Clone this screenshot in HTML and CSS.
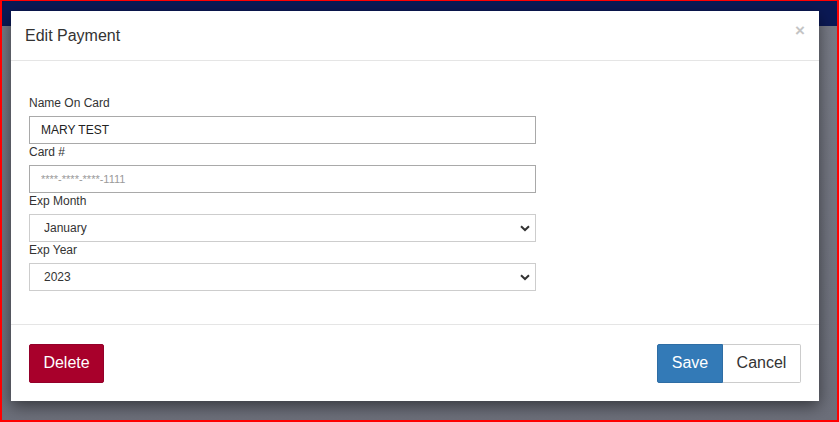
FILE: index.html
```html
<!DOCTYPE html>
<html>
<head>
<meta charset="utf-8">
<title>Edit Payment</title>
<link rel="stylesheet" href="styles.css">
</head>
<body>
<div class="frame">
  <div class="topbar"></div>
  <div class="backdrop"></div>
  <div class="modal">
    <div class="modal-header">
      <h4 class="modal-title">Edit Payment</h4>
      <button class="close" type="button">×</button>
    </div>
    <div class="modal-body">
      <div class="field">
        <label class="label">Name On Card</label>
        <input class="input" type="text" value="MARY TEST">
      </div>
      <div class="field">
        <label class="label">Card #</label>
        <input class="input" type="text" placeholder="****-****-****-1111">
      </div>
      <div class="field">
        <label class="label">Exp Month</label>
        <div class="select-wrap">
          <select class="select"><option>January</option></select>
          <svg class="chevron" width="10" height="7" viewBox="0 0 10 7"><path d="M1 1.2 L5 5 L9 1.2" fill="none" stroke="#333" stroke-width="2"/></svg>
        </div>
      </div>
      <div class="field">
        <label class="label">Exp Year</label>
        <div class="select-wrap">
          <select class="select"><option>2023</option></select>
          <svg class="chevron" width="10" height="7" viewBox="0 0 10 7"><path d="M1 1.2 L5 5 L9 1.2" fill="none" stroke="#333" stroke-width="2"/></svg>
        </div>
      </div>
    </div>
    <div class="modal-footer">
      <button class="btn btn-delete" type="button">Delete</button>
      <div class="btn-group">
        <button class="btn btn-save" type="button">Save</button>
        <button class="btn btn-cancel" type="button">Cancel</button>
      </div>
    </div>
  </div>
</div>
</body>
</html>
```

FILE: styles.css
```css
html, body {
  margin: 0;
  padding: 0;
}
body {
  font-family: "Liberation Sans", Arial, sans-serif;
  color: #333;
}
.frame {
  position: relative;
  width: 839px;
  height: 422px;
  box-sizing: border-box;
  border: 2px solid #f00;
  border-top-width: 1px;
  display: flex;
  flex-direction: column;
  overflow: hidden;
  background: #6f727d;
}
.topbar {
  height: 25px;
  background: #0b1955;
  flex: none;
}
.backdrop {
  flex: 1;
  background: linear-gradient(#777a85, #6c6f7a);
}
.modal {
  position: absolute;
  left: 9px;
  top: 10px;
  width: 808px;
  height: 390px;
  background: #fff;
  box-shadow: 0 5px 15px rgba(0, 0, 0, 0.5);
  display: flex;
  flex-direction: column;
}
.modal-header {
  height: 50px;
  box-sizing: border-box;
  padding: 15px 14px;
  border-bottom: 1px solid #e5e5e5;
  display: flex;
  justify-content: space-between;
  align-items: flex-start;
  flex: none;
}
.modal-title {
  margin: 0;
  font-size: 16px;
  line-height: 20px;
  font-weight: normal;
  color: #333;
}
.close {
  border: 0;
  background: none;
  padding: 0;
  margin: -5px 0 0 0;
  font-family: "Liberation Sans", Arial, sans-serif;
  font-size: 17px;
  font-weight: bold;
  line-height: 20px;
  color: #c4c4c4;
}
.modal-body {
  padding: 34px 18px 0;
  height: 263px;
  box-sizing: border-box;
  flex: none;
}
.field {
  width: 507px;
  display: flex;
  flex-direction: column;
}
.label {
  font-size: 12px;
  line-height: 17px;
  margin-bottom: 4px;
  color: #333;
}
.input {
  height: 28px;
  box-sizing: border-box;
  border: 1px solid #a9a9a9;
  padding: 0 11px;
  margin: 0;
  font-family: "Liberation Sans", Arial, sans-serif;
  font-size: 12px;
  color: #222;
  outline: none;
}
.input::placeholder {
  color: #9a9a9a;
  font-size: 11px;
}
.select-wrap {
  position: relative;
  height: 28px;
}
.select {
  appearance: none;
  -webkit-appearance: none;
  width: 100%;
  height: 28px;
  box-sizing: border-box;
  border: 1px solid #cdcdcd;
  border-radius: 0;
  background: #fff;
  padding: 0 0 0 14px;
  margin: 0;
  font-family: "Liberation Sans", Arial, sans-serif;
  font-size: 12px;
  color: #333;
  outline: none;
}
.chevron {
  position: absolute;
  right: 6px;
  top: 11px;
}
.modal-footer {
  border-top: 1px solid #e5e5e5;
  padding: 18px 18px 18px;
  display: flex;
  justify-content: space-between;
  align-items: center;
  flex: 1;
}
.btn-group {
  display: flex;
}
.btn {
  height: 39px;
  box-sizing: border-box;
  font-family: "Liberation Sans", Arial, sans-serif;
  font-size: 16px;
  padding: 0;
  margin: 0;
  border-radius: 2px;
  cursor: pointer;
}
.btn-delete {
  width: 75px;
  background: #a8002b;
  border: 1px solid #94002a;
  color: #fff;
}
.btn-save {
  width: 66px;
  background: #337ab7;
  border: 1px solid #2e6da4;
  color: #fff;
  border-radius: 2px 0 0 2px;
}
.btn-cancel {
  width: 78px;
  background: #fff;
  border: 1px solid #ccc;
  border-left: 0;
  color: #333;
  border-radius: 0 2px 2px 0;
}
```
